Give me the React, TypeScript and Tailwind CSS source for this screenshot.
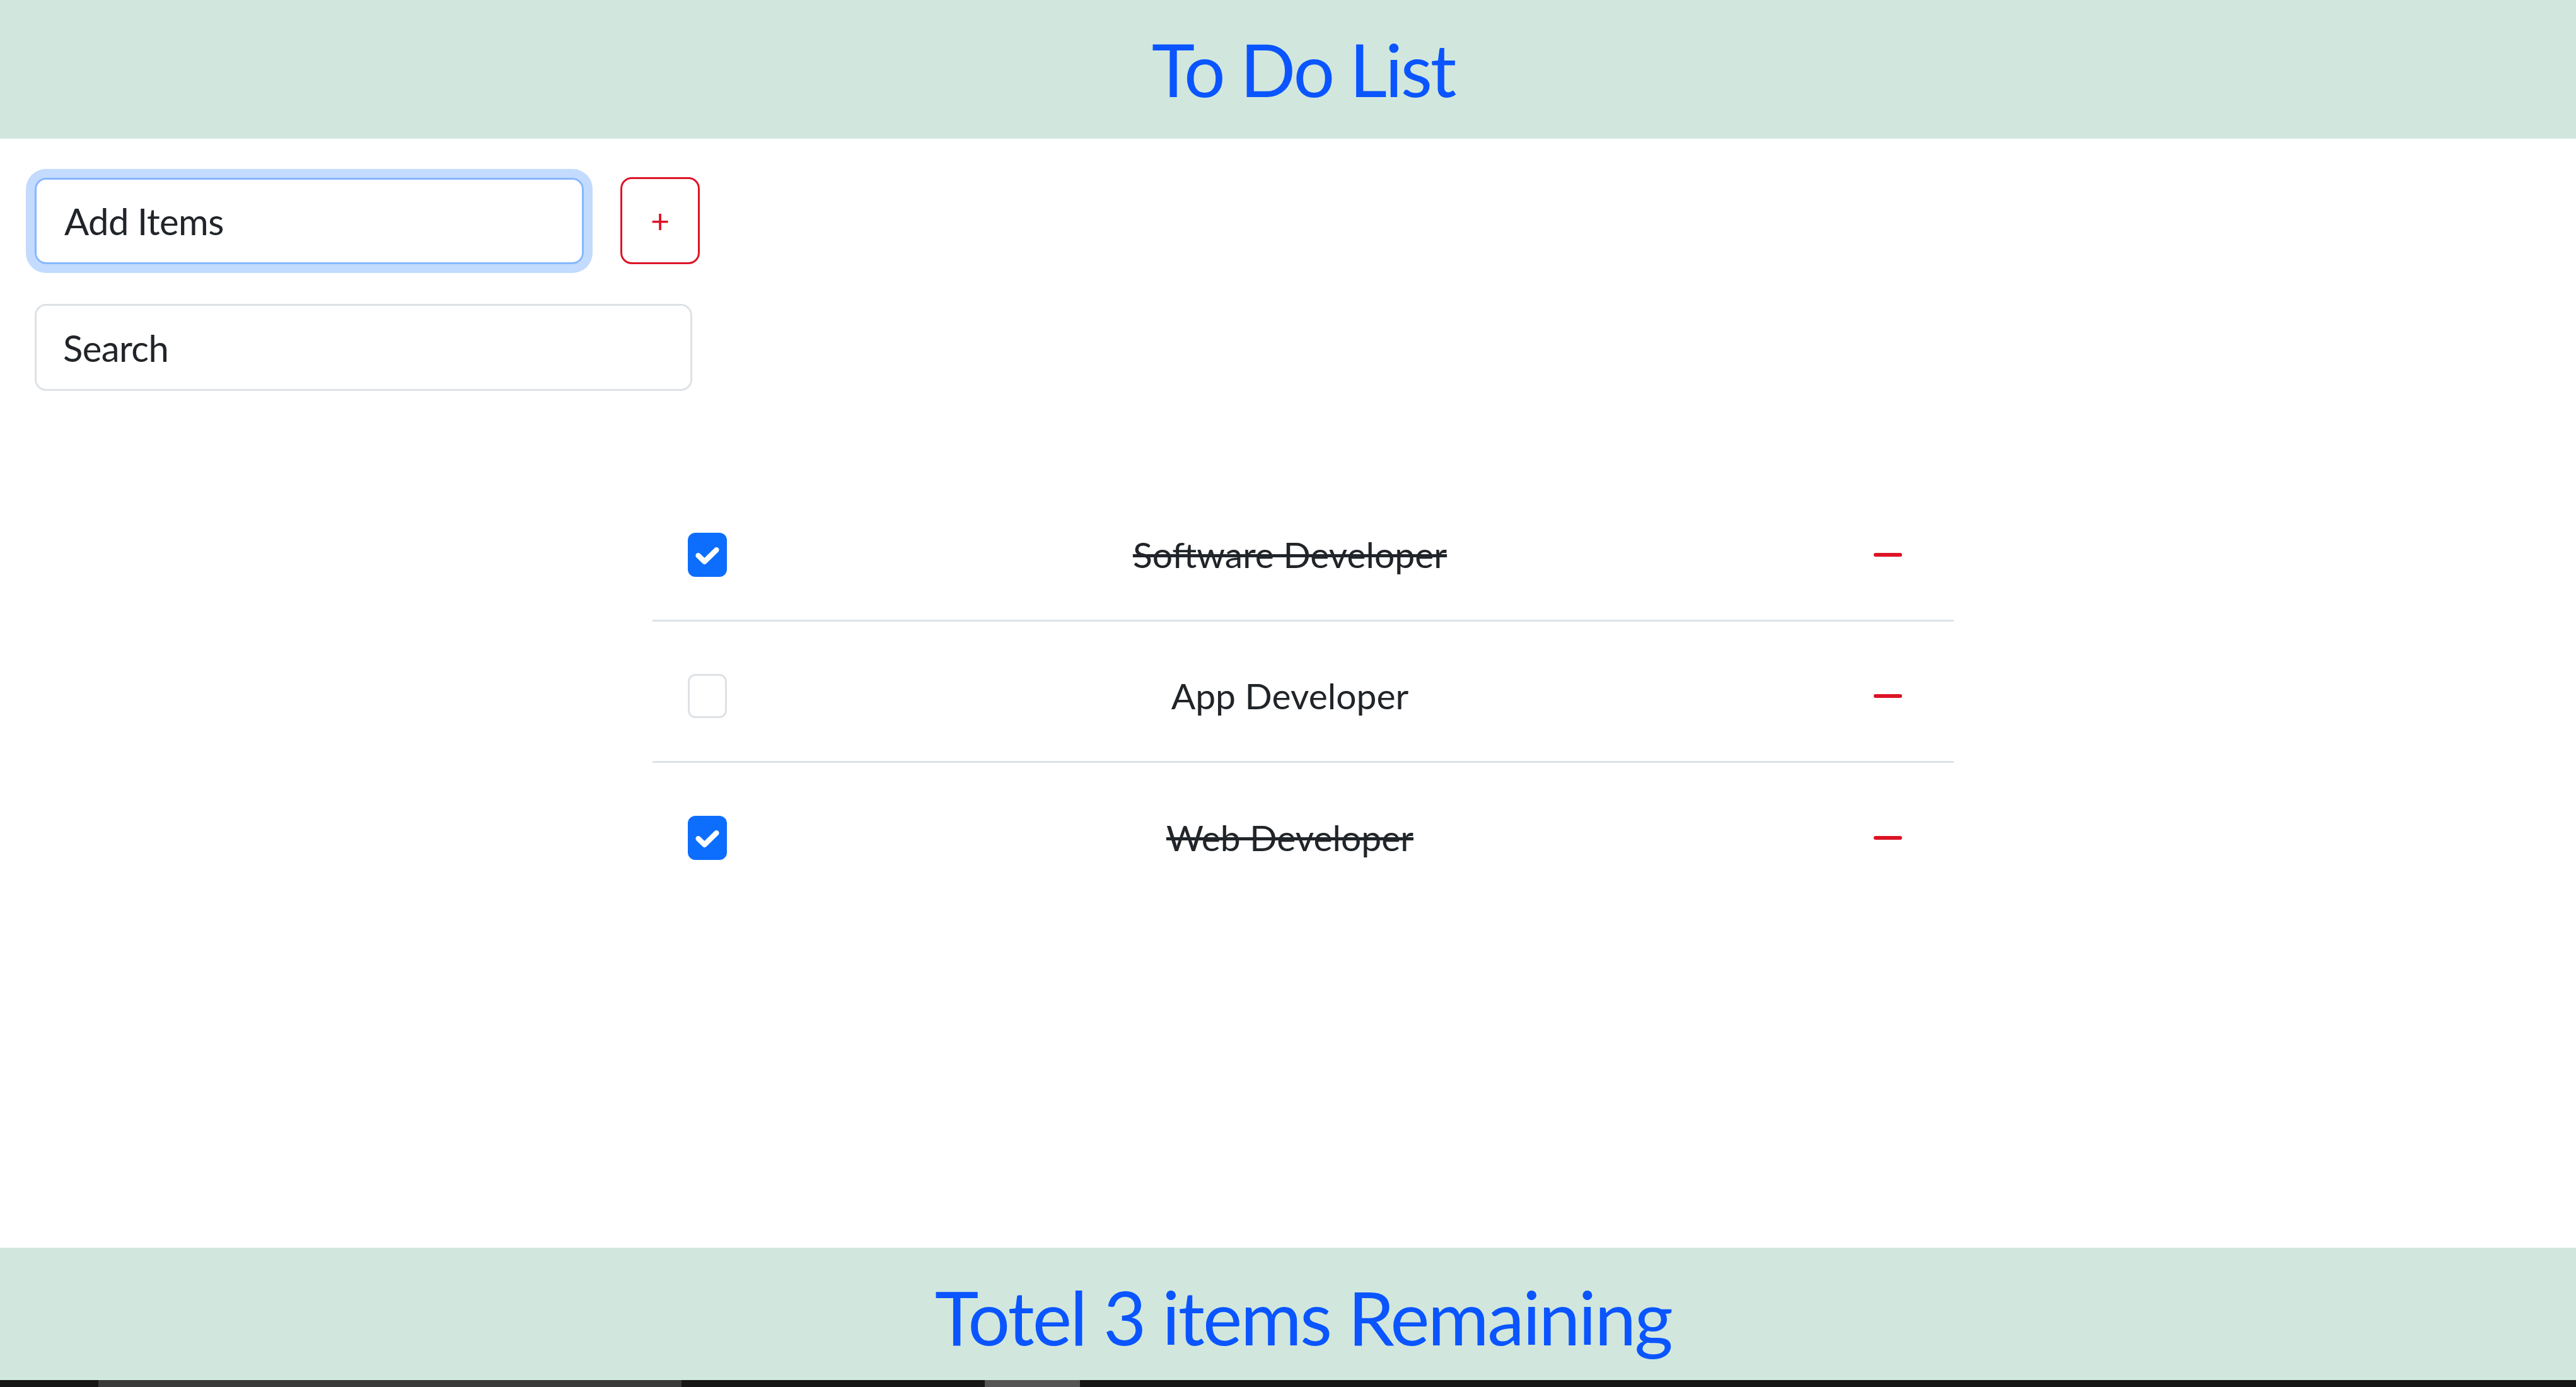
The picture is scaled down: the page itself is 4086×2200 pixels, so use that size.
import React, { useState } from 'react';

type Todo = {
  id: number;
  name: string;
  done: boolean;
};

const initialTodos: Todo[] = [
  { id: 1, name: 'Software Developer', done: true },
  { id: 2, name: 'App Developer', done: false },
  { id: 3, name: 'Web Developer', done: true },
];

function CheckBox({ checked, onChange }: { checked: boolean; onChange: () => void }) {
  return (
    <button
      type="button"
      onClick={onChange}
      className={
        checked
          ? 'w-[62px] h-[70px] rounded-[12px] bg-[#0d6efd] flex items-center justify-center shrink-0'
          : 'w-[62px] h-[70px] rounded-[12px] bg-white border-[3px] border-[#dee2e6] shrink-0'
      }
    >
      {checked && (
        <svg width="60" height="60" viewBox="0 0 20 20" fill="none">
          <path d="M5.2 10.4l3.3 3.2L14.8 7.4" stroke="white" strokeWidth="2.8" strokeLinecap="round" strokeLinejoin="round" />
        </svg>
      )}
    </button>
  );
}

export default function App() {
  const [todos, setTodos] = useState<Todo[]>(initialTodos);
  const [newItem, setNewItem] = useState('');
  const [search, setSearch] = useState('');

  const addItem = () => {
    if (!newItem.trim()) return;
    setTodos([...todos, { id: Date.now(), name: newItem, done: false }]);
    setNewItem('');
  };

  const toggle = (id: number) =>
    setTodos(todos.map((t) => (t.id === id ? { ...t, done: !t.done } : t)));

  const remove = (id: number) => setTodos(todos.filter((t) => t.id !== id));

  const visible = todos.filter((t) => t.name.toLowerCase().includes(search.toLowerCase()));

  return (
    <div className="h-[2200px] w-full flex flex-col bg-white font-['Lato',sans-serif] text-[#212529]">
      <header className="h-[220px] shrink-0 bg-[#d1e7dd] pl-[48px] flex items-center justify-center">
        <h1 className="text-[116px] leading-none tracking-[-0.027em] text-[#0a55ff]">To Do List</h1>
      </header>

      <main className="flex-1 pt-[61px] pl-[55px]">
        <div className="flex items-center gap-[58px]">
          <input
            value={newItem}
            onChange={(e) => setNewItem(e.target.value)}
            placeholder="Add Items"
            className="w-[871px] h-[137px] rounded-[18px] border-[3px] border-[#86b7fe] shadow-[0_0_0_14px_rgba(13,110,253,0.25)] px-[44px] text-[58px] tracking-[-0.01em] outline-none placeholder:text-[#212529]"
          />
          <button
            type="button"
            onClick={addItem}
            className="w-[126px] h-[138px] rounded-[18px] border-[3px] border-[#dc1426] text-[#dc1426] text-[52px] leading-none flex items-center justify-center"
          >
            +
          </button>
        </div>

        <input
          value={search}
          onChange={(e) => setSearch(e.target.value)}
          placeholder="Search"
          className="mt-[63px] w-[1043px] h-[138px] rounded-[18px] border-[3px] border-[#dee2e6] px-[42px] text-[58px] tracking-[-0.01em] outline-none placeholder:text-[#212529] block"
        />

        <ul className="mt-[142px] ml-[980px] w-[2064px]">
          {visible.map((t, i) => (
            <li
              key={t.id}
              className={
                i < visible.length - 1
                  ? 'h-[224px] flex items-center pt-[14px] pl-[56px] pr-[50px] border-b-[3px] border-[#dee2e6]'
                  : 'h-[224px] flex items-center pt-[14px] pl-[56px] pr-[50px]'
              }
            >
              <CheckBox checked={t.done} onChange={() => toggle(t.id)} />
              <span className={t.done ? 'flex-1 text-center text-[57px] line-through' : 'flex-1 text-center text-[57px]'}>
                {t.name}
              </span>
              <button
                type="button"
                onClick={() => remove(t.id)}
                className="w-[110px] h-[80px] flex items-center justify-center"
              >
                <span className="block w-[45px] h-[6px] rounded-full bg-[#dc1426]" />
              </button>
            </li>
          ))}
        </ul>
      </main>

      <footer className="h-[210px] shrink-0 bg-[#d1e7dd] pt-[9px] pl-[48px] flex items-center justify-center">
        <p className="text-[118px] leading-none tracking-[-0.023em] text-[#0a55ff]">Totel {todos.length} items Remaining</p>
      </footer>
      <div className="h-[11px] shrink-0 bg-[#161616] flex items-stretch">
        <div className="ml-[156px] w-[925px] bg-[#3a3a3a]" />
        <div className="ml-[481px] w-[151px] bg-[#555555]" />
      </div>
    </div>
  );
}
